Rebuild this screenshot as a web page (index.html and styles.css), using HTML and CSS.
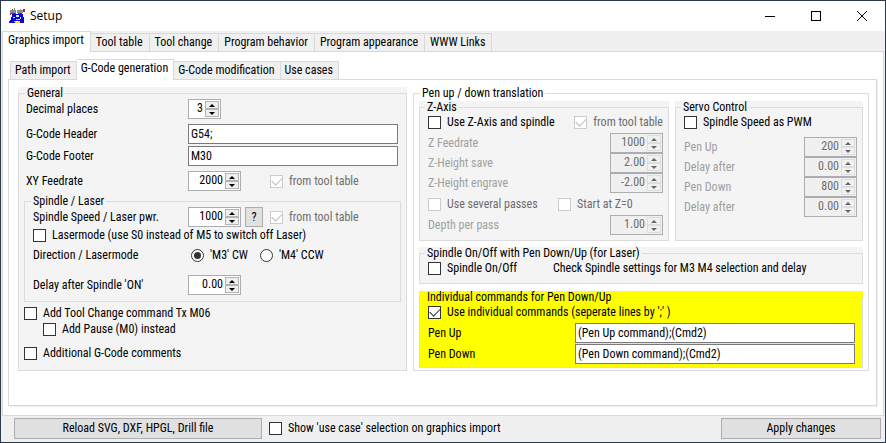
FILE: index.html
```html
<!DOCTYPE html>
<html lang="en">
<head>
<meta charset="utf-8">
<title>Setup</title>
<link rel="stylesheet" href="styles.css">
</head>
<body>
<div class="window">
  <header class="titlebar">
    <svg class="app-icon" viewBox="0 0 16 16" shape-rendering="crispEdges" aria-hidden="true">
      <path fill="#8c8c8c" d="M1 2h6v3H1zM8 2h6v3H8zM5 0h1v2H5zM11 1h1v1h-1z"/>
      <path fill="#444" d="M2 5h5v1H2zM9 5h4v1H9zM0 13h1v2H0zM3 1h1v1H3z"/>
      <path fill="#e01818" d="M14 1h2v3h-2zM1 5h1v2H1z"/>
      <path fill="#0808d8" d="M3 6h11v3h1v6h-4v-2H6v2H1v-3h1V9h1z"/>
      <path fill="#e8e8ff" d="M7 7h3v2H7zM4 9h2v1H4zM11 9h1v2h-1z"/>
      <path fill="#f4e000" d="M7 11h4v1H7zM5 13h2v1H5zM9 13h2v2H6v-1h3z"/>
    </svg>
    <h1>Setup</h1>
    <div class="window-buttons">
      <button type="button" aria-label="Minimize"><svg viewBox="0 0 10 10" shape-rendering="crispEdges"><path d="M0 5.500h10"/></svg></button>
      <button type="button" aria-label="Maximize"><svg viewBox="0 0 10 10" shape-rendering="crispEdges"><path d="M.5.500h9v9h-9z"/></svg></button>
      <button type="button" aria-label="Close"><svg viewBox="0 0 10 10"><path d="M0 0l10 10M10 0L0 10"/></svg></button>
    </div>
  </header>

  <main>
    <div class="tabs" role="tablist">
      <button type="button" role="tab" aria-selected="true">Graphics import</button>
      <button type="button" role="tab" aria-selected="false">Tool table</button>
      <button type="button" role="tab" aria-selected="false">Tool change</button>
      <button type="button" role="tab" aria-selected="false">Program behavior</button>
      <button type="button" role="tab" aria-selected="false">Program appearance</button>
      <button type="button" role="tab" aria-selected="false">WWW Links</button>
    </div>
    <section class="page outer-page">
      <div class="tabs inner-tabs" role="tablist">
        <button type="button" role="tab" aria-selected="false">Path import</button>
        <button type="button" role="tab" aria-selected="true">G-Code generation</button>
        <button type="button" role="tab" aria-selected="false">G-Code modification</button>
        <button type="button" role="tab" aria-selected="false">Use cases</button>
      </div>
      <section class="page inner-page">

        <div class="group shaded general">
          <fieldset>
            <legend>General</legend>
            <div class="row">
              <label for="decimals">Decimal places</label>
              <span class="spin narrow"><input id="decimals" type="text" value="3"><span class="steps"><button type="button" aria-label="Up"></button><button type="button" aria-label="Down"></button></span></span>
            </div>
            <div class="row gap-m">
              <label for="header">G-Code Header</label>
              <input class="text" id="header" type="text" value="G54;">
            </div>
            <div class="row gap-s">
              <label for="footer">G-Code Footer</label>
              <input class="text" id="footer" type="text" value="M30">
            </div>
            <div class="row gap-m">
              <label for="feed">XY Feedrate</label>
              <span class="spin"><input id="feed" type="text" value="2000"><span class="steps"><button type="button" aria-label="Up"></button><button type="button" aria-label="Down"></button></span></span>
              <label class="check from-table"><input type="checkbox" checked disabled>from tool table</label>
            </div>
            <div class="group laser">
              <fieldset>
                <legend>Spindle / Laser</legend>
                <div class="row">
                  <label for="speed">Spindle Speed / Laser pwr.</label>
                  <span class="spin"><input id="speed" type="text" value="1000"><span class="steps"><button type="button" aria-label="Up"></button><button type="button" aria-label="Down"></button></span></span>
                  <button class="push help" type="button">?</button>
                  <label class="check from-table"><input type="checkbox" checked disabled>from tool table</label>
                </div>
                <label class="check gap-s"><input type="checkbox">Lasermode (use S0 instead of M5 to switch off Laser)</label>
                <div class="row gap-l direction">
                  <span class="caption">Direction / Lasermode</span>
                  <label class="check"><input type="radio" name="dir" checked>'M3' CW</label>
                  <label class="check"><input type="radio" name="dir">'M4' CCW</label>
                </div>
                <div class="row gap-xl">
                  <label for="delay">Delay after Spindle 'ON'</label>
                  <span class="spin"><input id="delay" type="text" value="0.00"><span class="steps"><button type="button" aria-label="Up"></button><button type="button" aria-label="Down"></button></span></span>
                </div>
              </fieldset>
            </div>
            <label class="check gap-m"><input type="checkbox">Add Tool Change command Tx M06</label>
            <label class="check nested"><input type="checkbox">Add Pause (M0) instead</label>
            <label class="check comments"><input type="checkbox">Additional G-Code comments</label>
          </fieldset>
        </div>

        <div class="group pen">
          <fieldset>
            <legend>Pen up / down translation</legend>
            <div class="columns">
              <div class="group shaded zaxis">
                <fieldset>
                  <legend>Z-Axis</legend>
                  <div class="row top use-z">
                    <label class="check"><input type="checkbox">Use Z-Axis and spindle</label>
                    <label class="check"><input type="checkbox" checked disabled>from tool table</label>
                  </div>
                  <div class="spin-list">
                    <div class="row off"><label for="zfeed">Z Feedrate</label><span class="spin"><input id="zfeed" type="text" value="1000" disabled><span class="steps"><button type="button" aria-label="Up" disabled></button><button type="button" aria-label="Down" disabled></button></span></span></div>
                    <div class="row off"><label for="zsave">Z-Height save</label><span class="spin"><input id="zsave" type="text" value="2.00" disabled><span class="steps"><button type="button" aria-label="Up" disabled></button><button type="button" aria-label="Down" disabled></button></span></span></div>
                    <div class="row off"><label for="zengrave">Z-Height engrave</label><span class="spin"><input id="zengrave" type="text" value="-2.00" disabled><span class="steps"><button type="button" aria-label="Up" disabled></button><button type="button" aria-label="Down" disabled></button></span></span></div>
                  </div>
                  <div class="row gap-m passes">
                    <label class="check"><input type="checkbox" disabled>Use several passes</label>
                    <label class="check"><input type="checkbox" disabled>Start at Z=0</label>
                  </div>
                  <div class="row off depth"><label for="depth">Depth per pass</label><span class="spin"><input id="depth" type="text" value="1.00" disabled><span class="steps"><button type="button" aria-label="Up" disabled></button><button type="button" aria-label="Down" disabled></button></span></span></div>
                </fieldset>
              </div>
              <div class="group shaded servo">
                <fieldset>
                  <legend>Servo Control</legend>
                  <div class="row top">
                    <label class="check"><input type="checkbox">Spindle Speed as PWM</label>
                  </div>
                  <div class="spin-list">
                    <div class="row off"><label for="up">Pen Up</label><span class="spin"><input id="up" type="text" value="200" disabled><span class="steps"><button type="button" aria-label="Up" disabled></button><button type="button" aria-label="Down" disabled></button></span></span></div>
                    <div class="row off"><label for="updelay">Delay after</label><span class="spin"><input id="updelay" type="text" value="0.00" disabled><span class="steps"><button type="button" aria-label="Up" disabled></button><button type="button" aria-label="Down" disabled></button></span></span></div>
                    <div class="row off"><label for="down">Pen Down</label><span class="spin"><input id="down" type="text" value="800" disabled><span class="steps"><button type="button" aria-label="Up" disabled></button><button type="button" aria-label="Down" disabled></button></span></span></div>
                    <div class="row off"><label for="downdelay">Delay after</label><span class="spin"><input id="downdelay" type="text" value="0.00" disabled><span class="steps"><button type="button" aria-label="Up" disabled></button><button type="button" aria-label="Down" disabled></button></span></span></div>
                  </div>
                </fieldset>
              </div>
            </div>
            <div class="group shaded onoff">
              <fieldset>
                <legend>Spindle On/Off with Pen Down/Up (for Laser)</legend>
                <div class="row top">
                  <label class="check"><input type="checkbox">Spindle On/Off</label>
                  <span>Check Spindle settings for M3 M4 selection and delay</span>
                </div>
              </fieldset>
            </div>
            <div class="group individual">
              <fieldset>
                <legend>Individual commands for Pen Down/Up</legend>
                <div class="row top">
                  <label class="check"><input type="checkbox" checked>Use individual commands (seperate lines by ';' )</label>
                </div>
                <div class="commands">
                  <div class="row"><label for="cmdup">Pen Up</label><input class="text" id="cmdup" type="text" value="(Pen Up command);(Cmd2)"></div>
                  <div class="row"><label for="cmddown">Pen Down</label><input class="text" id="cmddown" type="text" value="(Pen Down command);(Cmd2)"></div>
                </div>
              </fieldset>
            </div>
          </fieldset>
        </div>

      </section>
    </section>
  </main>

  <footer class="actions">
    <button class="push reload" type="button">Reload SVG, DXF, HPGL, Drill file</button>
    <label class="check"><input type="checkbox">Show 'use case' selection on graphics import</label>
    <button class="push apply" type="button">Apply changes</button>
  </footer>
</div>
</body>
</html>
```
FILE: styles.css
```css
* { box-sizing: border-box; }

body {
  margin: 0;
  background: #fff;
  color: #000;
  font: 12px/13px "Roboto Condensed", Roboto, sans-serif;
}

button, input { font: inherit; color: inherit; margin: 0; }

.window {
  min-height: 100vh;
  display: flex;
  flex-direction: column;
  border: 1px solid #2a3b4c;
  background: #f0f0f0;
}

/* Title bar */
.titlebar {
  display: flex;
  align-items: center;
  height: 30px;
  padding-left: 8px;
  background: #fff;
}
.app-icon { width: 16px; height: 16px; }
.titlebar h1 {
  margin: 0 0 0 5px;
  font: 12px/16px "Open Sans", "Noto Sans", sans-serif;
}
.window-buttons { display: flex; margin-left: auto; }
.window-buttons button {
  width: 46px;
  height: 30px;
  padding: 0;
  border: 0;
  background: none;
  display: flex;
  align-items: center;
  justify-content: center;
}
.window-buttons svg { width: 10px; height: 10px; fill: none; stroke: #000; overflow: visible; }

/* Tabs */
main { flex: 1; display: flex; flex-direction: column; padding: 0 1px; }
.tabs { display: flex; align-items: flex-end; height: 20px; }
.tabs button {
  height: 18px;
  padding: 0 6px 0 5px;
  border: 1px solid #d9d9d9;
  border-width: 1px 1px 0 0;
  background: #f0f0f0;
  white-space: nowrap;
}
.inner-tabs button { padding: 0 5px 0 4px; }
.tabs button:first-child { border-left-width: 1px; }
.tabs button[aria-selected="true"] {
  height: 21px;
  margin-bottom: -1px;
  padding-bottom: 3px;
  background: #fff;
  position: relative;
}
.page { flex: 1; border: 1px solid #d9d9d9; background: #fff; }
.outer-page { display: flex; flex-direction: column; padding: 7px 6px 9px 5px; }
.inner-tabs { padding-left: 2px; }
.inner-page {
  display: flex;
  align-items: flex-start;
  gap: 6px;
  padding: 7px 7px 0 9px;
  box-shadow: 1px 1px 0 #f0f0f0;
}

/* Group boxes */
.group { min-width: 0; }
.group fieldset {
  min-width: 0;
  height: 100%;
  margin: 0;
  padding: 0 5px 5px;
  border: 1px solid #dcdcdc;
}
.group legend { margin-left: 1px; padding: 0 2px; line-height: 12px; }
.shaded { background: #f4f4f4; }
.general { flex: 389 1 0; height: 284px; }
.pen { flex: 456 1 0; }
.general > fieldset > .row { padding-left: 2px; }
.general > fieldset > .row > label:first-child { width: 162px; }
.laser fieldset { padding: 0 8px 6px; }
.laser legend { margin-left: -2px; }
.laser { margin-top: 4px; }
.laser .row > :first-child { width: 155px; }

.columns { display: flex; gap: 6px; margin-top: 2px; }
.pen > fieldset { padding-bottom: 2px; }
.pen .group fieldset { padding: 0 5px 5px 8px; }
.pen .group legend { margin-left: -3px; }
.zaxis { flex: 250 1 0; }
.servo { flex: 188 1 0; }
.onoff { margin-top: 6px; height: 37px; }
.individual { margin-top: 7px; background: #ff0; }
.pen .individual fieldset { padding: 0 7px 3px 8px; }

/* Rows */
.row { display: flex; align-items: center; white-space: nowrap; }
.top { padding-top: 3px; }
.gap-s { margin-top: 2px; }
.gap-m { margin-top: 5px; }
.gap-l { margin-top: 7px; }
.gap-xl { margin-top: 13px; }
.off { color: #a0a0a0; justify-content: space-between; }
.depth { margin-top: 4px; }
.spin-list { margin-top: 4px; }
.servo .spin-list { margin-top: 8px; }
.commands { display: grid; gap: 1px; margin-top: 4px; }
.from-table { margin-left: 29px; }
.help + .from-table { margin-left: 7px; }
.help { width: 18px; margin-left: 4px; }
.direction { gap: 3px; }
.direction .check + .check { margin-left: 9px; }
.nested { margin: 3px 0 0 19px; }
.comments { margin-top: 11px; }
.use-z .check:first-child { width: 147px; }
.passes .check:first-child { width: 130px; }
.onoff .check { width: 125px; }
.individual .row > label[for] { width: 147px; }

/* Controls */
.check { display: flex; align-items: center; gap: 6px; white-space: nowrap; }
.check:has(:disabled) { color: #6d6d6d; }
.check input {
  appearance: none;
  flex: none;
  width: 13px;
  height: 13px;
  border: 1px solid #333;
  background: #fff;
  display: grid;
  place-items: center;
}
.check input:disabled { border-color: #ccc; }
.check input[type="checkbox"]:checked::before {
  content: "";
  width: 9px;
  height: 5px;
  margin-top: -3px;
  border: solid #333;
  border-width: 0 0 1px 1px;
  transform: rotate(-45deg);
}
.check input:disabled:checked::before { border-color: #bbb; }
.check input[type="radio"] { border-radius: 50%; }
.check input[type="radio"]:checked::before {
  content: "";
  width: 7px;
  height: 7px;
  border-radius: 50%;
  background: #333;
}

.text {
  flex: 1;
  min-width: 0;
  height: 20px;
  padding: 0 2px;
  border: 1px solid #7a7a7a;
  background: #fff;
}
.general .text { margin-right: 3px; }

.spin {
  display: flex;
  width: 53px;
  height: 20px;
  border: 1px solid #abadb3;
  background: #fff;
}
.narrow { width: 33px; }
.spin input {
  flex: 1;
  min-width: 0;
  padding: 0 2px 2px 0;
  border: 0;
  background: none;
  text-align: right;
}
.spin .steps { display: flex; flex-direction: column; width: 15px; padding: 1px 1px 1px 0; }
.spin .steps button {
  flex: 1;
  padding: 0;
  border: 1px solid #b4b4b4;
  background: #eee;
  display: grid;
  place-items: center;
}
.steps button::before { content: ""; border: solid transparent; border-width: 0 3px 3px; border-bottom-color: #000; }
.steps button:last-child::before { border-width: 3px 3px 0; border-top-color: #000; }
.spin:has(:disabled) { background: #f0f0f0; color: #6d6d6d; }
.spin .steps button:disabled { border-color: #ddd; background: #f0f0f0; }
.steps button:disabled::before { border-bottom-color: #666; }
.steps button:last-child:disabled::before { border-top-color: #666; }

.push { height: 20px; padding: 0; border: 1px solid #adadad; background: #e1e1e1; white-space: nowrap; }

/* Footer */
.actions { display: flex; align-items: center; gap: 7px; padding: 2px 4px 3px 13px; }
.actions .push { height: 21px; }
.reload { width: 248px; }
.apply { width: 160px; margin-left: auto; }
```
